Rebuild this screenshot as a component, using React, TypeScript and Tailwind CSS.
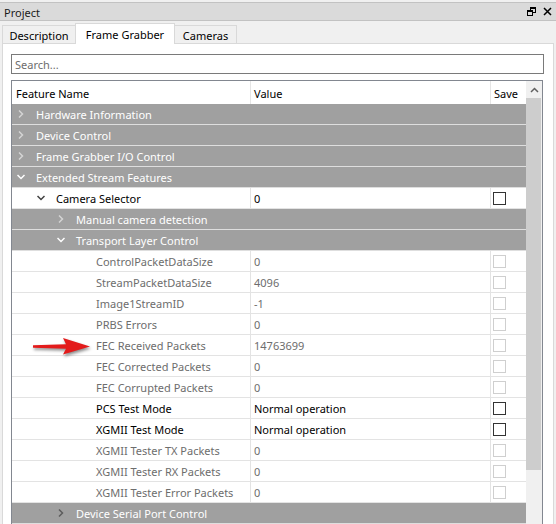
import React from "react";

type Row =
  | { kind: "group"; level: number; label: string; open: boolean; chevDark?: boolean }
  | { kind: "item"; level: number; label: string; value: string; enabled: boolean; open?: boolean };

const rows: Row[] = [
  { kind: "group", level: 0, label: "Hardware Information", open: false },
  { kind: "group", level: 0, label: "Device Control", open: false },
  { kind: "group", level: 0, label: "Frame Grabber I/O Control", open: false },
  { kind: "group", level: 0, label: "Extended Stream Features", open: true },
  { kind: "item", level: 1, label: "Camera Selector", value: "0", enabled: true, open: true },
  { kind: "group", level: 2, label: "Manual camera detection", open: false },
  { kind: "group", level: 2, label: "Transport Layer Control", open: true },
  { kind: "item", level: 3, label: "ControlPacketDataSize", value: "0", enabled: false },
  { kind: "item", level: 3, label: "StreamPacketDataSize", value: "4096", enabled: false },
  { kind: "item", level: 3, label: "Image1StreamID", value: "-1", enabled: false },
  { kind: "item", level: 3, label: "PRBS Errors", value: "0", enabled: false },
  { kind: "item", level: 3, label: "FEC Received Packets", value: "14763699", enabled: false },
  { kind: "item", level: 3, label: "FEC Corrected Packets", value: "0", enabled: false },
  { kind: "item", level: 3, label: "FEC Corrupted Packets", value: "0", enabled: false },
  { kind: "item", level: 3, label: "PCS Test Mode", value: "Normal operation", enabled: true },
  { kind: "item", level: 3, label: "XGMII Test Mode", value: "Normal operation", enabled: true },
  { kind: "item", level: 3, label: "XGMII Tester TX Packets", value: "0", enabled: false },
  { kind: "item", level: 3, label: "XGMII Tester RX Packets", value: "0", enabled: false },
  { kind: "item", level: 3, label: "XGMII Tester Error Packets", value: "0", enabled: false },
  { kind: "group", level: 2, label: "Device Serial Port Control", open: false, chevDark: true },
];

function Chevron({ open, color }: { open: boolean; color: string }) {
  return (
    <svg width="8" height="8" viewBox="0 0 8 8" className="block">
      {open ? (
        <path d="M0.5 2 L4 5.5 L7.5 2" fill="none" stroke={color} strokeWidth="1.5" />
      ) : (
        <path d="M2 0.5 L5.5 4 L2 7.5" fill="none" stroke={color} strokeWidth="1.5" />
      )}
    </svg>
  );
}

function Indent({ level }: { level: number }) {
  return <div className="shrink-0" style={{ width: level * 20 }} />;
}

function Checkbox({ enabled }: { enabled: boolean }) {
  return (
    <div
      className={
        enabled
          ? "w-[13px] h-[13px] border border-[#333333] bg-white"
          : "w-[13px] h-[13px] border border-[#cfcfcf] bg-white"
      }
    />
  );
}

function TreeRow({ row }: { row: Row }) {
  if (row.kind === "group") {
    return (
      <div className="flex items-center h-[21px] bg-[#a0a0a0] border-b border-[#dedede] text-white">
        <Indent level={row.level} />
        <div className="w-[24px] shrink-0 flex items-center pl-[5px]">
          <Chevron
            open={row.open}
            color={row.open ? "#ffffff" : row.chevDark ? "#5c5c5c" : "#d4d4d4"}
          />
        </div>
        <span className="whitespace-nowrap pt-[1px]">{row.label}</span>
      </div>
    );
  }
  const textColor = row.enabled ? "text-black" : "text-[#6d6d6d]";
  return (
    <div className={`flex h-[21px] border-b border-[#e3e3e3] bg-white ${textColor}`}>
      <div className="w-[239px] shrink-0 border-r border-[#e3e3e3] flex items-center">
        <Indent level={row.level} />
        <div className="w-[24px] shrink-0 flex items-center pl-[5px]">
          {row.open !== undefined ? <Chevron open={row.open} color="#404040" /> : null}
        </div>
        <span className="whitespace-nowrap pt-[1px]">{row.label}</span>
      </div>
      <div className="w-[240px] shrink-0 border-r border-[#e3e3e3] flex items-center pl-[3px] pt-[1px] whitespace-nowrap">
        {row.value}
      </div>
      <div className="flex-1 flex items-center pl-[2px]">
        <Checkbox enabled={row.enabled} />
      </div>
    </div>
  );
}

export default function App() {
  return (
    <div className="relative w-[556px] h-[524px] overflow-hidden bg-[#f0f0f0] text-[11px] leading-none text-black font-['Noto_Sans',sans-serif]">
      <div className="pt-[2px]">
        {/* Title bar */}
        <div className="h-[19px] bg-[#dadada] border-t border-b border-[#c2c2c2] flex items-center justify-between pl-[4px] pr-[4px]">
          <span className="text-[#1a1a1a] pt-[2px]">Project</span>
          <div className="flex items-center gap-[7px]">
            <svg width="9" height="9" viewBox="0 0 9 9" className="block">
              <rect x="3.5" y="0.5" width="5" height="5" fill="none" stroke="#000" strokeWidth="1" />
              <rect x="0.5" y="3.5" width="5" height="5" fill="#dadada" stroke="#000" strokeWidth="1" />
              <line x1="0" y1="4" x2="6" y2="4" stroke="#000" strokeWidth="2" />
              <line x1="3" y1="1" x2="9" y2="1" stroke="#000" strokeWidth="2" />
            </svg>
            <svg width="9" height="9" viewBox="0 0 9 9" className="block">
              <path d="M1 1 L8 8 M8 1 L1 8" stroke="#000" strokeWidth="1.5" />
            </svg>
          </div>
        </div>

        {/* Tabs */}
        <div className="flex items-end h-[23px] pl-[2px] -mb-px relative z-10">
          <div className="w-[73px] h-[19px] border-l border-t border-b border-[#d9d9d9] bg-[#f0f0f0] flex items-center justify-center pt-[2px]">
            Description
          </div>
          <div className="w-[100px] h-[21px] border-l border-t border-r border-[#d9d9d9] bg-white flex items-center justify-center">
            Frame Grabber
          </div>
          <div className="w-[62px] h-[19px] border-t border-r border-b border-[#d9d9d9] bg-[#f0f0f0] flex items-center justify-center pt-[2px]">
            Cameras
          </div>
        </div>

        {/* Pane */}
        <div className="ml-[2px] w-[552px] h-[490px] border border-[#d9d9d9] bg-white">
          <div className="ml-[8px] mt-[10px] w-[533px] h-[20px] border border-[#7a7a7a] flex items-center pl-[3px] pt-[1px] text-[#6d6d6d]">
            Search...
          </div>

          <div className="ml-[8px] mt-[6px] w-[532px] h-[460px] border-l border-t border-r border-[#828790] flex">
            <div className="w-[514px] shrink-0">
              {/* header */}
              <div className="flex h-[23px] bg-white">
                <div className="w-[239px] shrink-0 border-r border-[#e5e5e5] flex items-center pl-[4px] pt-[1px]">
                  Feature Name
                </div>
                <div className="w-[240px] shrink-0 border-r border-[#e5e5e5] flex items-center pl-[3px] pt-[1px]">
                  Value
                </div>
                <div className="flex-1 flex items-center pl-[3px] pt-[1px]">Save</div>
              </div>
              {rows.map((r, i) => (
                <TreeRow key={i} row={r} />
              ))}
            </div>
            {/* scrollbar */}
            <div className="w-[16px] shrink-0 bg-[#f0f0f0] flex flex-col">
              <div className="h-[17px] flex items-center justify-center">
                <svg width="9" height="6" viewBox="0 0 9 6" className="block">
                  <path d="M1 5 L4.5 1.5 L8 5" fill="none" stroke="#606060" strokeWidth="1.5" />
                </svg>
              </div>
              <div className="w-[15px] h-[372px] bg-[#cdcdcd]" />
            </div>
          </div>
        </div>
      </div>

      {/* Red annotation arrow */}
      <svg
        width="70"
        height="30"
        viewBox="0 0 70 30"
        className="absolute left-[28px] top-[332px] drop-shadow-[1px_2px_1.5px_rgba(0,0,0,0.45)]"
      >
        <path
          d="M5 13.2 L38 12.3 L35 6 L62 14.5 L35 22.5 L38 16.7 L5 15.8 Z"
          fill="#e31b1b"
        />
      </svg>
    </div>
  );
}
